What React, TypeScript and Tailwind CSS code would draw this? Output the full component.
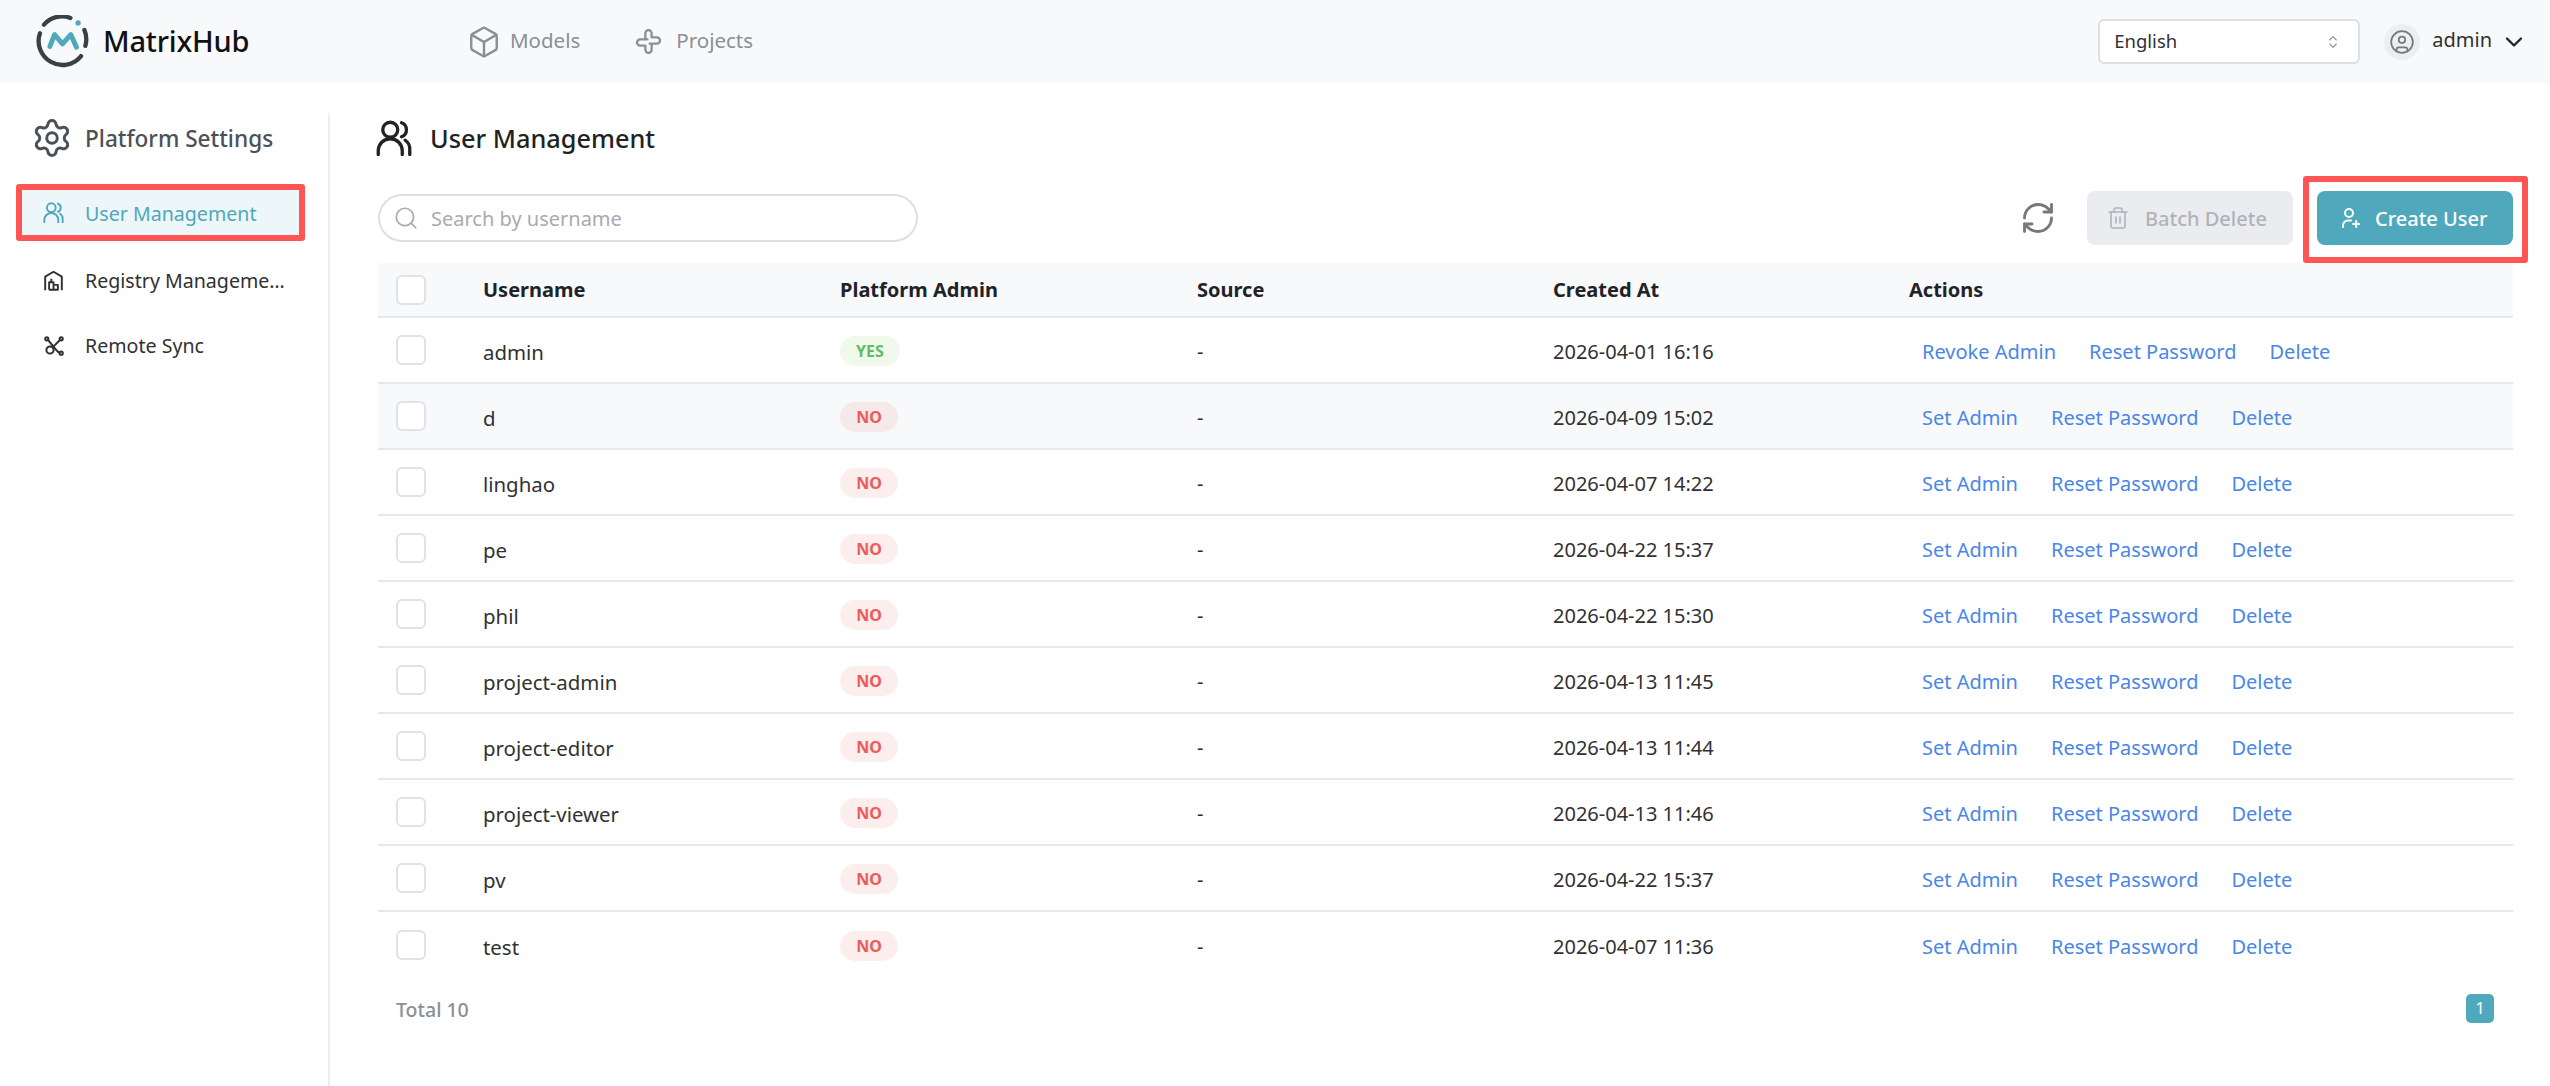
import React from 'react';
import { Box, ChevronDown, ChevronsUpDown, CircleUser, RefreshCw, Search, Settings, Trash2 } from 'lucide-react';

interface UserRow {
  name: string;
  admin: boolean;
  created: string;
}

const users: UserRow[] = [
  { name: 'admin', admin: true, created: '2026-04-01 16:16' },
  { name: 'd', admin: false, created: '2026-04-09 15:02' },
  { name: 'linghao', admin: false, created: '2026-04-07 14:22' },
  { name: 'pe', admin: false, created: '2026-04-22 15:37' },
  { name: 'phil', admin: false, created: '2026-04-22 15:30' },
  { name: 'project-admin', admin: false, created: '2026-04-13 11:45' },
  { name: 'project-editor', admin: false, created: '2026-04-13 11:44' },
  { name: 'project-viewer', admin: false, created: '2026-04-13 11:46' },
  { name: 'pv', admin: false, created: '2026-04-22 15:37' },
  { name: 'test', admin: false, created: '2026-04-07 11:36' },
];

const gridCols = 'grid grid-cols-[105px_357px_357px_356px_356px_1fr] items-center';

const Logo = () => (
  <svg viewBox="48 33 160 160" className="w-[53px] h-[53px]" fill="none">
    <path d="M72 62A72 72 0 0 1 152 42" stroke="#3a4046" strokeWidth="13" strokeLinecap="round" />
    <path d="M60 88A72 72 0 0 0 184 157" stroke="#3a4046" strokeWidth="13" strokeLinecap="round" />
    <path d="M194 78A72 72 0 0 1 197 126" stroke="#3a4046" strokeWidth="13" strokeLinecap="round" />
    <path d="M90 128L104 92L128 120L153 92L170 130" stroke="#4fa8bc" strokeWidth="15" strokeLinecap="round" strokeLinejoin="round" />
    <circle cx="175" cy="57" r="8" fill="#4fa8bc" />
  </svg>
);

const ProjectsIcon = () => (
  <svg viewBox="0 0 24 24" className="w-[25px] h-[25px]" fill="none" stroke="#8a8f96" strokeWidth="2.2" strokeLinecap="round" strokeLinejoin="round">
    <path d="M9 9.5V4a3 3 0 0 1 6 0v4h5a3 3 0 0 1 0 6h-7" />
    <path d="M15 14.5V20a3 3 0 0 1-6 0v-4H4a3 3 0 0 1 0-6h7" />
  </svg>
);

const UsersIcon = ({ className, stroke }: { className: string; stroke: string }) => (
  <svg viewBox="0 0 24 24" className={className} fill="none" stroke={stroke} strokeWidth="2.2" strokeLinecap="round">
    <circle cx="9.5" cy="6.5" r="5" />
    <path d="M17 1.8a5 5 0 0 1 0 9.4" />
    <path d="M1.5 23v-2.5a8 8 0 0 1 16 0V23" />
    <path d="M19.5 13.5a7 7 0 0 1 3 6V23" />
  </svg>
);

const RegistryIcon = () => (
  <svg viewBox="0 0 24 24" className="w-[21px] h-[21px]" fill="none" stroke="#303133" strokeWidth="2.2" strokeLinejoin="round">
    <path d="M2.5 23V7.5L12 2l9.5 5.5V23" />
    <path d="M7 22.5V14h5v8.5M12 17h5v5.5H7M9.5 10v4" />
  </svg>
);

const SyncIcon = () => (
  <svg viewBox="0 0 20 20" className="w-[20px] h-[20px]" fill="none" stroke="#303133" strokeWidth="2">
    <circle cx="6" cy="14" r="3.6" />
    <circle cx="2.8" cy="2.8" r="1.6" />
    <circle cx="17.2" cy="2.8" r="1.6" />
    <circle cx="17.2" cy="17.2" r="1.6" />
    <path d="M8.6 11.4L16 4M3.9 3.9L9 10c2 2.5 4 5.5 6.6 7" />
  </svg>
);

const AddUserIcon = () => (
  <svg viewBox="0 0 18 20" className="w-[18px] h-[20px]" fill="none" stroke="#fff" strokeWidth="2" strokeLinecap="round">
    <circle cx="7" cy="5" r="4" />
    <path d="M1 19v-1.5a5 5 0 0 1 5-5h3" />
    <path d="M11 16h6.5M14.2 13v6" />
  </svg>
);

const Checkbox = () => (
  <span className="block ml-[18px] w-[30px] h-[30px] rounded-[6px] border-2 border-[#dfe2e6] bg-white" />
);

const Badge = ({ yes, hovered }: { yes: boolean; hovered: boolean }) => {
  if (yes) {
    return (
      <span className="inline-flex items-center justify-center w-[60px] h-[30px] rounded-full bg-[#f0f9eb] text-[#62bb62] text-[16px] font-bold">
        YES
      </span>
    );
  }
  return (
    <span className={`inline-flex items-center justify-center w-[58px] h-[30px] rounded-full text-[#ec5a5a] text-[16px] font-bold ${hovered ? 'bg-[#f6e9ea]' : 'bg-[#fdeeee]'}`}>
      NO
    </span>
  );
};

const App = () => {
  return (
    <div className="w-[2550px] h-[1086px] overflow-hidden bg-white font-['Noto_Sans',sans-serif] text-[20px] text-[#303133]">
      <header className="h-[83px] bg-[#f8f9fb] flex items-center pl-[36px] pr-[22px]">
        <div className="flex items-center gap-[14px] w-[431px]">
          <Logo />
          <span className="text-[29px] font-medium text-[#111] tracking-[-0.2px] pb-[2px]">MatrixHub</span>
        </div>
        <nav className="flex items-center text-[#8a8f96] text-[20.5px]">
          <Box className="w-[34px] h-[34px]" strokeWidth={1.7} />
          <span className="ml-[9px] pb-[3px]">Models</span>
          <span className="ml-[56px]">
            <ProjectsIcon />
          </span>
          <span className="ml-[15px] pb-[3px]">Projects</span>
        </nav>
        <div className="ml-auto flex items-center">
          <div className="w-[262px] h-[45px] rounded-[6px] border-2 border-[#dcdfe4] bg-white flex items-center justify-between pl-[14px] pr-[17px] text-[18.5px]">
            <span className="pb-[2px]">English</span>
            <ChevronsUpDown className="w-[16px] h-[18px] text-[#8a8f96]" strokeWidth={1.6} />
          </div>
          <div className="ml-[24px] w-[36px] h-[36px] rounded-full bg-[#eceef0] flex items-center justify-center">
            <CircleUser className="w-[26px] h-[26px] text-[#74797f]" strokeWidth={1.6} />
          </div>
          <span className="ml-[12px] pb-[3px]">admin</span>
          <ChevronDown className="ml-[8px] w-[28px] h-[28px] text-[#222]" strokeWidth={2} />
        </div>
      </header>

      <div className="flex pt-[30px]">
        <aside className="w-[330px] h-[973px] border-r-2 border-[#eceef0] shrink-0">
          <div className="h-[50px] flex items-center pl-[31px] gap-[12px] text-[#4b5158] text-[22.6px] font-medium">
            <Settings className="w-[42px] h-[42px]" strokeWidth={1.7} />
            <span className="pt-[1px]">Platform Settings</span>
          </div>
          <div className="ml-[16px] mt-[21px] w-[289px] h-[57px] border-[6px] border-[#ff5555] rounded-[3px] bg-[#edf6f8] flex items-center pl-[21px] gap-[21px] text-[#4fa8bc] text-[19.6px]">
            <UsersIcon className="w-[21px] h-[21px] shrink-0" stroke="#4fa8bc" />
            <span className="pt-[2px]">User Management</span>
          </div>
          <div className="h-[66px] mt-[6px] flex items-center pl-[43px] gap-[21px] text-[19.6px]">
            <RegistryIcon />
            <span className="w-[201px] truncate pt-[2px]">Registry Management</span>
          </div>
          <div className="h-[66px] flex items-center pl-[44px] gap-[21px] text-[19.6px]">
            <SyncIcon />
            <span>Remote Sync</span>
          </div>
        </aside>

        <main className="flex-1 pl-[48px] pr-[37px]">
          <div className="h-[50px] flex items-center gap-[18px] -ml-[2px] text-[25.3px] font-medium text-[#222]">
            <UsersIcon className="w-[36px] h-[36px]" stroke="#222" />
            <span className="pt-[2px]">User Management</span>
          </div>

          <div className="mt-[28px] h-[54px] flex items-center">
            <div className="w-[540px] h-[48px] rounded-full border-2 border-[#dcdfe4] flex items-center pl-[13px] gap-[12px] text-[#a8abb2]">
              <Search className="w-[26px] h-[26px]" strokeWidth={1.6} />
              <span className="pt-[2px]">Search by username</span>
            </div>
            <RefreshCw className="ml-auto w-[36px] h-[36px] text-[#74797f]" strokeWidth={1.9} />
            <button className="ml-[31px] w-[206px] h-[54px] rounded-[8px] bg-[#ebecf0] text-[#b0b3b8] flex items-center pl-[19px] gap-[15px] font-medium">
              <Trash2 className="w-[24px] h-[24px]" strokeWidth={1.6} />
              <span className="pt-[2px]">Batch Delete</span>
            </button>
            <button className="relative ml-[24px] w-[196px] h-[54px] rounded-[8px] bg-[#4fa8bc] text-white flex items-center pl-[25px] gap-[15px] font-medium">
              <AddUserIcon />
              <span className="pt-[2px]">Create User</span>
              <span className="absolute left-[-14px] right-[-15px] top-[-15px] bottom-[-18px] border-[6px] border-[#ff5555] rounded-[3px]" />
            </button>
          </div>

          <div className="mt-[18px]">
            <div className={`${gridCols} h-[55px] bg-[#f8f9fb] border-b-2 border-[#e6e8eb] font-bold text-[20px] text-[#1f2328]`}>
              <Checkbox />
              <span>Username</span>
              <span>Platform Admin</span>
              <span>Source</span>
              <span>Created At</span>
              <span>Actions</span>
            </div>
            {users.map((user, i) => (
              <div
                key={user.name}
                className={`${gridCols} h-[66px] ${i < users.length - 1 ? 'border-b-2 border-[#e6e8eb]' : ''} ${user.name === 'd' ? 'bg-[#f8f9fb]' : ''}`}
              >
                <Checkbox />
                <span className="pt-[4px] text-[20.4px]">{user.name}</span>
                <span className="pt-[1px]"><Badge yes={user.admin} hovered={user.name === 'd'} /></span>
                <span className="pt-[4px]">-</span>
                <span className="pt-[4px]">{user.created}</span>
                <span className="flex gap-[33px] pl-[13px] pt-[4px] text-[#4a86e8]">
                  <span>{user.admin ? 'Revoke Admin' : 'Set Admin'}</span>
                  <span>Reset Password</span>
                  <span>Delete</span>
                </span>
              </div>
            ))}
          </div>

          <div className="mt-[14px] flex items-center justify-between pl-[18px] pr-[19px]">
            <span className="text-[#8a8f96] font-medium text-[19.5px] pt-[3px]">Total 10</span>
            <span className="w-[28px] h-[29px] rounded-[5px] bg-[#4fa8bc] text-white text-[17px] flex items-center justify-center">1</span>
          </div>
        </main>
      </div>
    </div>
  );
};

export default App;
